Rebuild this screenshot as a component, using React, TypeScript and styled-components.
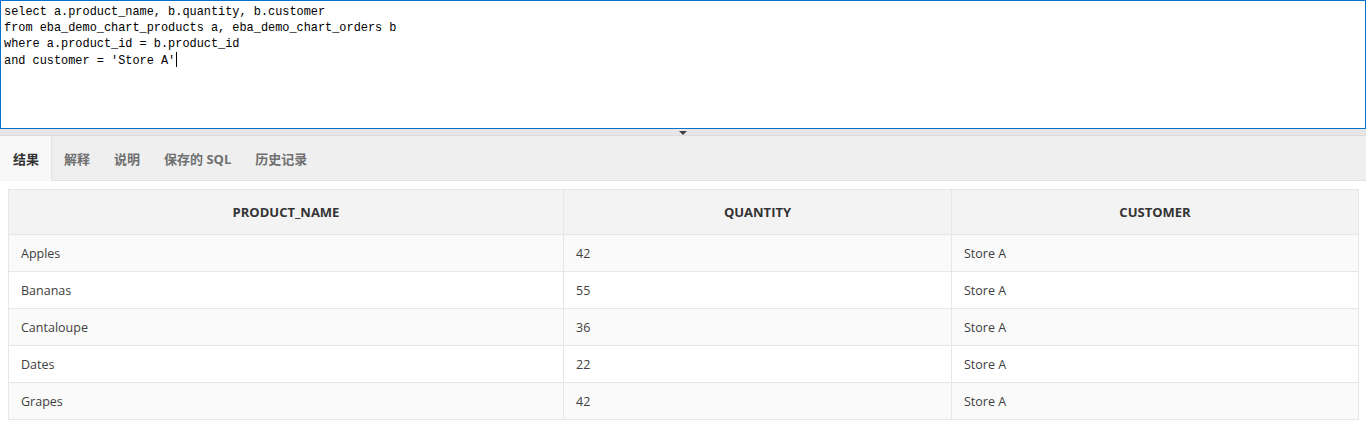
import React from "react";
import styled, { createGlobalStyle } from "styled-components";

const Global = createGlobalStyle`
  html, body { margin: 0; padding: 0; background: #ffffff; }
  body { font-family: "Open Sans", "Noto Sans CJK SC", sans-serif; }
  * { box-sizing: border-box; }
`;

const Page = styled.div`
  display: flex;
  flex-direction: column;
  width: 1366px;
`;

const Editor = styled.div`
  height: 129px;
  border: 1px solid #0572ce;
  background: #fff;
  padding: 3px 3px;
  font-family: "Liberation Mono", monospace;
  font-size: 11.9px;
  line-height: 16px;
  color: #000;
  white-space: pre;
`;

const Caret = styled.span`
  display: inline-block;
  width: 1px;
  height: 15px;
  background: #000;
  vertical-align: -3px;
  margin-left: 1px;
`;

const Splitter = styled.div`
  height: 7px;
  background: #e6e6e6;
  display: flex;
  justify-content: center;
  border-bottom: 1px solid #dcdcdc;
`;

const Arrow = styled.div`
  width: 0;
  height: 0;
  margin-top: 2px;
  border-left: 4px solid transparent;
  border-right: 4px solid transparent;
  border-top: 4px solid #404040;
`;

const TabBar = styled.div`
  display: flex;
  height: 45px;
  background: #efefef;
  border-bottom: 1px solid #e2e2e2;
`;

const Tab = styled.div<{ $active?: boolean }>`
  display: flex;
  align-items: center;
  padding: 0 12px 0 ${(p) => (p.$active ? "13px" : "12px")};
  font-family: "Open Sans", "Noto Sans CJK SC", sans-serif;
  font-size: 13px;
  font-weight: 700;
  color: ${(p) => (p.$active ? "#333" : "#707070")};
  background: ${(p) => (p.$active ? "#f8f8f8" : "transparent")};
  border-right: ${(p) => (p.$active ? "1px solid #e2e2e2" : "none")};
  margin-bottom: ${(p) => (p.$active ? "-1px" : "0")};
`;

const TableWrap = styled.div`
  padding: 8px 8px;
`;

const Table = styled.table`
  width: 1350px;
  border-collapse: collapse;
  font-family: "Open Sans", sans-serif;
  font-size: 12.5px;
  color: #404040;
  table-layout: fixed;
`;

const Th = styled.th`
  height: 45px;
  background: #f3f3f3;
  border: 1px solid #e6e6e6;
  font-size: 13px;
  font-weight: 700;
  color: #333;
  text-align: center;
  padding: 0 12px;
`;

const Tr = styled.tr<{ $odd: boolean }>`
  background: ${(p) => (p.$odd ? "#fafafa" : "#ffffff")};
`;

const Td = styled.td`
  height: 37px;
  border: 1px solid #e6e6e6;
  padding: 0 12px;
  text-align: left;
`;

const rows = [
  ["Apples", "42", "Store A"],
  ["Bananas", "55", "Store A"],
  ["Cantaloupe", "36", "Store A"],
  ["Dates", "22", "Store A"],
  ["Grapes", "42", "Store A"],
];

export default function App() {
  return (
    <Page>
      <Global />
      <Editor>
        {"select a.product_name, b.quantity, b.customer\nfrom eba_demo_chart_products a, eba_demo_chart_orders b\nwhere a.product_id = b.product_id\nand customer = 'Store A'"}
        <Caret />
      </Editor>
      <Splitter>
        <Arrow />
      </Splitter>
      <TabBar>
        <Tab $active>结果</Tab>
        <Tab>解释</Tab>
        <Tab>说明</Tab>
        <Tab>保存的 SQL</Tab>
        <Tab>历史记录</Tab>
      </TabBar>
      <TableWrap>
        <Table>
          <colgroup>
            <col style={{ width: 555 }} />
            <col style={{ width: 388 }} />
            <col style={{ width: 407 }} />
          </colgroup>
          <thead>
            <tr>
              <Th>PRODUCT_NAME</Th>
              <Th>QUANTITY</Th>
              <Th>CUSTOMER</Th>
            </tr>
          </thead>
          <tbody>
            {rows.map((r, i) => (
              <Tr key={r[0]} $odd={i % 2 === 0}>
                {r.map((c, j) => (
                  <Td key={j}>{c}</Td>
                ))}
              </Tr>
            ))}
          </tbody>
        </Table>
      </TableWrap>
    </Page>
  );
}
